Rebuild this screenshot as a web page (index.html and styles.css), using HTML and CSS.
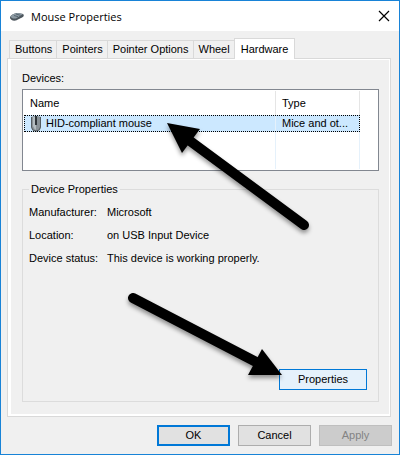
FILE: index.html
```html
<!DOCTYPE html>
<html lang="en">
<head>
    <meta charset="UTF-8">
    <meta name="viewport" content="width=device-width, initial-scale=1.0">
    <title>Mouse Properties</title>
    <link rel="stylesheet" href="styles.css">
</head>
<body>

    <div class="dialog">
        <header class="title-bar">
            <svg class="title-icon" width="16" height="16" viewBox="0 0 16 16" aria-hidden="true">
                <path d="M1 9.5 C1 7.5 5 5 9 5 L14 6 C15.3 7 15 8.5 13 9.5 L7 12.5 C4 13 1 12 1 9.5 Z" fill="#4c555c"/>
                <path d="M1.5 8.5 C3 6.5 6 5 9 5 L14 6 L7 10.5 C4 10.8 2 10 1.5 8.5 Z" fill="#8d9aa3"/>
                <path d="M5 7.5 L9 8.7 M7 6 L11.5 7.3" stroke="#566570" fill="none"/>
            </svg>
            <h1 class="title">Mouse Properties</h1>
            <button class="close" type="button" aria-label="Close">
                <svg width="12" height="12" viewBox="0 0 12 12">
                    <path d="M1 1 L11 11 M11 1 L1 11" stroke="#000" stroke-width="1.2" fill="none"/>
                </svg>
            </button>
        </header>

        <main class="content">
            <div class="tabs" role="tablist">
                <button class="tab" type="button" role="tab">Buttons</button>
                <button class="tab" type="button" role="tab">Pointers</button>
                <button class="tab" type="button" role="tab">Pointer Options</button>
                <button class="tab" type="button" role="tab">Wheel</button>
                <button class="tab tab-active" type="button" role="tab" aria-selected="true">Hardware</button>
            </div>

            <section class="panel" role="tabpanel">
                <h2 class="label" id="devices">Devices:</h2>
                <div class="device-list">
                    <table class="devices" aria-labelledby="devices">
                        <thead>
                            <tr>
                                <th class="col-name">Name</th>
                                <th class="col-type">Type</th>
                            </tr>
                        </thead>
                        <tbody>
                            <tr class="selected">
                                <td>
                                    <div class="device">
                                        <svg width="12" height="16" viewBox="0 0 12 16" aria-hidden="true">
                                            <path d="M1 1 Q6 -1 11 1 L11 11 Q10 15.5 6 15.5 Q2 15.5 1 11 Z" fill="#8a9297"/>
                                            <path d="M3 1 L3 10 Q4 13 6 14 L6 1 Z" fill="#b4bcc0"/>
                                            <path d="M5 0 H7 V9 H5 Z" fill="#30363a"/>
                                            <path d="M1.5 1 V11 Q2 15 6 15 Q10 15 10.5 11 V1" stroke="#555c61" fill="none"/>
                                        </svg>
                                        HID-compliant mouse
                                    </div>
                                </td>
                                <td>Mice and ot...</td>
                            </tr>
                            <tr class="filler">
                                <td></td>
                                <td></td>
                            </tr>
                        </tbody>
                    </table>
                </div>

                <fieldset class="group">
                    <legend>Device Properties</legend>
                    <dl class="details">
                        <dt>Manufacturer:</dt>
                        <dd>Microsoft</dd>
                        <dt>Location:</dt>
                        <dd>on USB Input Device</dd>
                        <dt>Device status:</dt>
                        <dd>This device is working properly.</dd>
                    </dl>
                    <button class="btn btn-hover" type="button">Properties</button>
                </fieldset>
            </section>
        </main>

        <footer class="actions">
            <button class="btn btn-default" type="button">OK</button>
            <button class="btn" type="button">Cancel</button>
            <button class="btn" type="button" disabled>Apply</button>
        </footer>

        <!-- Pointer arrows over the dialog -->
        <svg class="arrows" width="400" height="455" viewBox="0 0 400 455" aria-hidden="true">
            <g>
                <path d="M304 225 L186 138" stroke="#000" stroke-width="10" stroke-linecap="round"/>
                <path d="M167 123 L200 129 L182 153 Z"/>
            </g>
            <g>
                <path d="M133 298 L260 364" stroke="#000" stroke-width="10" stroke-linecap="round"/>
                <path d="M282 375 L262 349 L248 375 Z"/>
            </g>
        </svg>
    </div>

</body>
</html>
```
FILE: styles.css
```css
* {
    box-sizing: border-box;
}
body {
    margin: 0;
    font-family: "Liberation Sans", Arial, sans-serif;
    font-size: 11px;
    line-height: 15px;
    color: #000;
}
button {
    font: inherit;
    color: inherit;
}
.dialog {
    position: relative;
    display: flex;
    flex-direction: column;
    min-height: 100vh;
    border: 1px solid #1883d7;
    background-color: #f0f0f0;
}

/* Title bar */
.title-bar {
    display: flex;
    align-items: center;
    height: 30px;
    padding: 0 8px;
    background-color: #fff;
}
.title {
    flex: 1;
    margin: 0 0 0 6px;
    font-family: "Open Sans", sans-serif;
    font-size: 11px;
    font-weight: normal;
}
.close {
    display: flex;
    padding: 1px;
    border: none;
    background: none;
}

/* Tabs */
.content {
    flex: 1;
    display: flex;
    flex-direction: column;
    padding: 7px 8px 0 6px;
}
.tabs {
    display: flex;
    align-items: flex-end;
    padding-left: 2px;
}
.tab {
    height: 18px;
    padding: 0 4px 0 5px;
    border: 1px solid #d9d9d9;
    border-right: none;
    border-bottom: none;
    background-color: #f0f0f0;
}
.tab-active {
    position: relative;
    height: 21px;
    margin-bottom: -1px;
    padding: 0 6px;
    border-right: 1px solid #d9d9d9;
    background-color: #fff;
}
.panel {
    flex: 1;
    display: flex;
    flex-direction: column;
    padding: 12px 11px 14px 14px;
    border: 1px solid #d9d9d9;
    box-shadow: inset 3px 0 #fff, inset -1px 0 #fff, inset 0 1px #fff, inset 0 -2px #fff;
}
.label {
    margin: 0 0 3px;
    font-size: 11px;
    font-weight: normal;
}

/* Device list */
.device-list {
    height: 82px;
    padding: 1px 18px 1px 1px;
    border: 1px solid #828790;
    background-color: #fff;
}
.devices {
    width: 100%;
    height: 100%;
    border-collapse: separate;
    border-spacing: 0;
    table-layout: fixed;
}
.devices th,
.devices td {
    padding: 0 6px;
    border-right: 1px solid #e5f1fb;
    font-weight: normal;
    text-align: left;
    white-space: nowrap;
}
.devices th {
    height: 24px;
    border-color: #e5e5e5;
}
.devices .col-name {
    width: 75%;
}
.selected {
    height: 17px;
    background-color: #cce8ff;
    outline: 1px dotted #000;
    outline-offset: -1px;
}
.device {
    display: flex;
    align-items: center;
    gap: 4px;
    height: 17px;
}

/* Device properties */
.group {
    flex: 1;
    display: flex;
    flex-direction: column;
    min-width: 0;
    margin: 11px 0 0;
    padding: 8px 11px 11px 6px;
    border: 1px solid #dcdcdc;
}
.group legend {
    padding: 0 2px;
}
.details {
    display: grid;
    grid-template-columns: 78px 1fr;
    row-gap: 8px;
    margin: 0 0 103px;
}
.details dd {
    margin: 0;
}

/* Buttons */
.btn {
    width: 73px;
    height: 21px;
    padding: 0;
    border: 1px solid #adadad;
    background-color: #e1e1e1;
}
.btn-hover {
    align-self: flex-end;
    width: 88px;
    border-color: #0078d7;
    background-color: #e5f1fb;
}
.btn-default {
    border: 2px solid #0078d7;
}
.btn:disabled {
    border-color: #bfbfbf;
    background-color: #ccc;
    color: #838383;
}
.actions {
    display: flex;
    justify-content: flex-end;
    gap: 8px;
    padding: 8px 7px;
}

.arrows {
    position: absolute;
    top: -1px;
    left: -1px;
    pointer-events: none;
}
.arrows g {
    filter: drop-shadow(0 3px 2px rgba(0, 0, 0, 0.4));
}
```
